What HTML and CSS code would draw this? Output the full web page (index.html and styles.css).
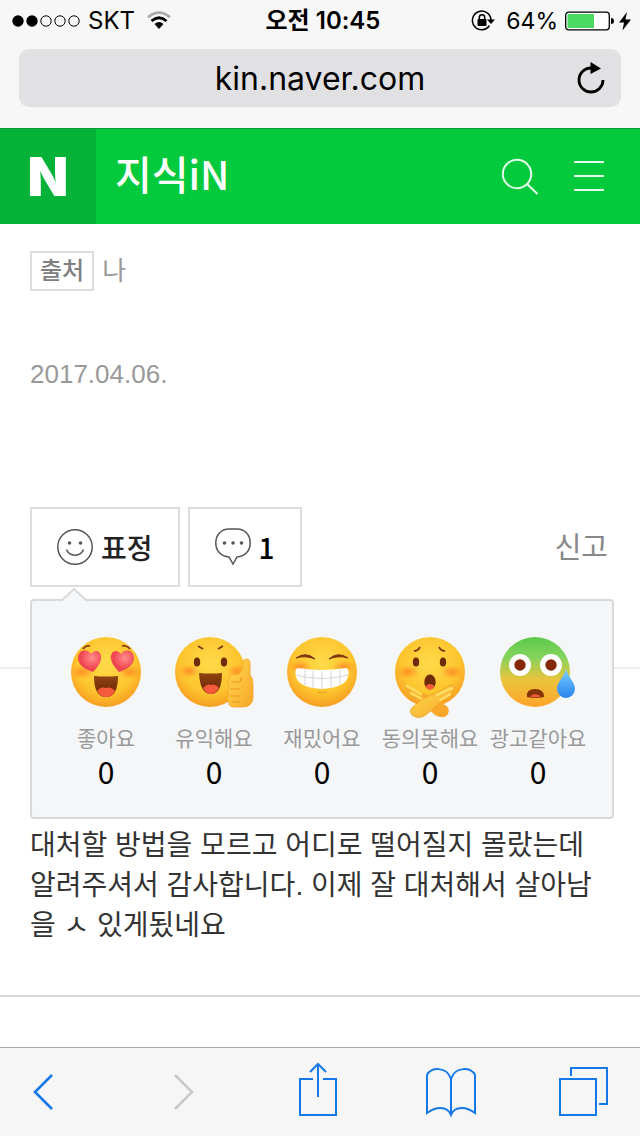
FILE: index.html
```html
<!DOCTYPE html>
<html lang="ko">
<head>
<meta charset="utf-8">
<meta name="viewport" content="width=device-width, initial-scale=1">
<title>지식iN</title>
<link rel="stylesheet" href="styles.css">
</head>
<body>
<div class="browser-top">
  <div class="status">
    <div class="status-left">
      <svg width="68" height="14" viewBox="0 0 68 14" aria-hidden="true">
        <circle cx="6" cy="7" r="5.7"/><circle cx="20" cy="7" r="5.7"/>
        <g fill="none" stroke="#000"><circle cx="34" cy="7" r="5.2"/><circle cx="48" cy="7" r="5.2"/><circle cx="62" cy="7" r="5.2"/></g>
      </svg>
      <span>SKT</span>
      <svg width="24" height="19" viewBox="0 0 24 19" aria-hidden="true">
        <path d="M1 6.200Q12-3 23 6.200" fill="none" stroke="#aaa" stroke-width="2.800"/>
        <path d="M4.500 10Q12 3.500 19.500 10" fill="none" stroke="#000" stroke-width="2.800"/>
        <path d="M7.500 13Q12 9 16.500 13L12 18Z"/>
      </svg>
    </div>
    <strong class="time">오전 10:45</strong>
    <div class="status-right">
      <svg width="24" height="22" viewBox="0 0 24 22" aria-hidden="true">
        <path d="M18.500 15.500A9.300 9.300 0 1 1 20 10" fill="none" stroke="#000" stroke-width="1.500"/>
        <path d="M16 9.500H24L20 14Z"/><rect x="6.500" y="9" width="9" height="7" rx="1"/>
        <path d="M8.300 9.500V7.500a2.700 2.700 0 0 1 5.400 0v2" fill="none" stroke="#000" stroke-width="1.500"/>
      </svg>
      <span class="percent">64%</span>
      <svg width="66" height="20" viewBox="0 0 66 20" aria-hidden="true">
        <rect x=".7" y="1.200" width="43.600" height="17.600" rx="3" fill="#fff" stroke="#000" stroke-width="1.300"/>
        <path d="M2.500 3H29V17H2.500Z" fill="#4cd964"/>
        <path d="M46 7q3 0 3 3t-3 3Z"/><path d="M62 1L54 11.500H59L57.500 19.500L66 8.500H60.500Z"/>
      </svg>
    </div>
  </div>
  <form class="address">
    <input class="address-input" type="text" value="kin.naver.com" aria-label="주소">
    <button class="reload" type="button" aria-label="새로고침">
      <svg width="28" height="32" viewBox="0 0 28 32" aria-hidden="true"><path d="M26 18A12 12 0 1 1 14 6" fill="none" stroke="#000" stroke-width="2.800"/><path d="M13.500 0L24 6.500L13.500 12Z"/></svg>
    </button>
  </form>
</div>

<header class="site-header">
  <a class="logo" href="#" aria-label="네이버">N</a>
  <a class="service" href="#">지식iN</a>
  <button class="head-button" type="button" aria-label="검색">
    <svg width="38" height="38" viewBox="0 0 38 38" fill="none" stroke="#e3fbe9" stroke-width="2"><circle cx="16" cy="16" r="14.200"/><path d="M26 26L36.500 36"/></svg>
  </button>
  <button class="head-button" type="button" aria-label="메뉴">
    <svg width="30" height="38" viewBox="0 0 30 38" stroke="#e3fbe9" stroke-width="2"><path d="M0 4H30M0 18H30M0 32H30"/></svg>
  </button>
</header>

<main>
  <section class="answer">
    <div class="source"><span class="source-tag">출처</span><span>나</span></div>
    <time class="date" datetime="2017-04-06">2017.04.06.</time>
    <div class="actions">
      <button class="action" type="button">
        <svg width="36" height="36" viewBox="0 0 36 36" aria-hidden="true"><g fill="none" stroke="#555" stroke-width="1.500"><circle cx="18" cy="18" r="17.200"/><path d="M9.500 20.500C12 28 24 28 26.500 20.500"/></g><g fill="#555"><circle cx="12.500" cy="14" r="1.800"/><circle cx="23.500" cy="14" r="1.800"/></g></svg>
        <span>표정</span>
      </button>
      <button class="action" type="button">
        <svg width="36" height="38" viewBox="0 0 36 38" aria-hidden="true"><path d="M14 1H22C30 1 35.200 7 35.200 15S30 28.500 22 29L18 36L14 29C6 28.500.8 23 .8 15S6 1 14 1Z" fill="none" stroke="#555" stroke-width="1.500"/><g fill="#555"><circle cx="9.500" cy="15" r="1.800"/><circle cx="18" cy="15" r="1.800"/><circle cx="26.500" cy="15" r="1.800"/></g></svg>
        <span class="count">1</span>
      </button>
      <a class="report" href="#">신고</a>

      <div class="reactions">
        <svg class="pointer" width="26" height="14" viewBox="0 0 26 14" aria-hidden="true"><path d="M0 14L13 1L26 14" fill="#f5f6f8"/><path d="M0 13L13 1L26 13" fill="none" stroke="#d8d9db" stroke-width="2"/></svg>
        <button class="reaction" type="button">
          <svg width="84" height="84" viewBox="0 0 84 84" aria-hidden="true">
            <defs>
              <radialGradient id="face" cx=".5" cy=".38" r=".64"><stop offset="0" stop-color="#ffdb4b"/><stop offset=".65" stop-color="#fdc52e"/><stop offset="1" stop-color="#f59a20"/></radialGradient>
              <radialGradient id="blush"><stop offset="0" stop-color="#ff7b22" stop-opacity=".75"/><stop offset="1" stop-color="#ff8a22" stop-opacity="0"/></radialGradient>
              <radialGradient id="heart" cx=".6" cy=".35"><stop offset="0" stop-color="#ff8c8c"/><stop offset="1" stop-color="#ef4550"/></radialGradient>
              <linearGradient id="mouth" x2="0" y2="1"><stop stop-color="#8d4310"/><stop offset="1" stop-color="#6d2508"/></linearGradient>
              <linearGradient id="sick" x2="0" y2="1"><stop stop-color="#5cc94b"/><stop offset=".28" stop-color="#83d45c"/><stop offset=".62" stop-color="#ecc33c"/><stop offset="1" stop-color="#ffa42a"/></linearGradient>
              <linearGradient id="tear" x2="0" y2="1"><stop stop-color="#7bcfff"/><stop offset="1" stop-color="#2783ee"/></linearGradient>
              <linearGradient id="hand" x2="1" y2="1"><stop stop-color="#ffdc52"/><stop offset="1" stop-color="#f7a526"/></linearGradient>
            </defs>
            <circle cx="42" cy="38" r="35" fill="url(#face)"/>
            <ellipse cx="18" cy="38" rx="12" ry="7" fill="url(#blush)"/><ellipse cx="66" cy="38" rx="12" ry="7" fill="url(#blush)"/>
            <path d="M19 15Q22 11 26 12M58 12Q63 11 66 15" fill="none" stroke="#7c3510" stroke-width="1.600"/>
            <path d="M29 38Q14 33 14 24C14 16 23 14 27 20C32 14 38 18 37 25Q36 31 29 38Z" fill="url(#heart)"/>
            <path d="M55 38Q48 31 47 25C46 18 52 14 57 20C61 14 70 16 70 24Q70 33 55 38Z" fill="url(#heart)"/>
            <path d="M30 42Q42 43 54 42Q54 63 42 63T30 42Z" fill="url(#mouth)"/><path d="M33 57Q37 52 42 54Q47 52 51 57Q48 63 42 63T33 57Z" fill="#f45b3b"/>
          </svg>
          <span class="reaction-name">좋아요</span><span class="reaction-count">0</span>
        </button>
        <button class="reaction" type="button">
          <svg width="84" height="84" viewBox="0 0 84 84" aria-hidden="true">
            <circle cx="38" cy="38" r="35" fill="url(#face)"/><ellipse cx="17" cy="37" rx="11" ry="7" fill="url(#blush)"/><ellipse cx="65" cy="37" rx="10" ry="7" fill="url(#blush)"/>
            <path d="M26 12L31 15M46 15L51 12" stroke="#7c3510" stroke-width="1.700"/>
            <g fill="#6d2b09"><ellipse cx="25" cy="28" rx="3.200" ry="4.600"/><ellipse cx="52" cy="28" rx="3.200" ry="4.600"/></g>
            <path d="M27 39Q38 40 50 39Q50 60 39 60T27 39Z" fill="url(#mouth)"/><path d="M31 54Q35 49 39 51Q43 49 47 54Q44 60 39 60T31 54Z" fill="#f45b3b"/>
            <path d="M60 41L67 40Q71 37 71 29Q71 25 75 25Q78 25 78 30V41Q81 44 81 50V64Q80 73 71 73H61Q56 72 57 68Q54 65 57 61Q54 57 57 53Q54 49 57 45Q57 41 60 41Z" fill="url(#hand)" stroke="#f3a42b" stroke-width=".8"/>
            <path d="M59 48H67Q70 47 69 43M58 55H68M58 62H68M60 68H67" fill="none" stroke="#e99722" stroke-width="1.200"/>
          </svg>
          <span class="reaction-name">유익해요</span><span class="reaction-count">0</span>
        </button>
        <button class="reaction" type="button">
          <svg width="84" height="84" viewBox="0 0 84 84" aria-hidden="true">
            <circle cx="42" cy="38" r="35" fill="url(#face)"/><ellipse cx="20" cy="33" rx="12" ry="7" fill="url(#blush)"/><ellipse cx="64" cy="33" rx="12" ry="7" fill="url(#blush)"/>
            <path d="M16 24Q26 17 35 25Q25 21 16 24ZM49 25Q58 17 68 24Q59 21 49 25Z" fill="#7c3510" stroke="#7c3510"/>
            <path d="M18 34Q42 38 66 34Q70 35 68 42C66 59 18 59 16 42Q14 35 18 34Z" fill="#fff"/>
            <path d="M16 41Q42 48 68 41M25 36V51M33 37V54M42 37V55M51 37V54M60 36V51" fill="none" stroke="#d8d2d5"/>
            <path d="M37 58Q42 60 47 58" fill="none" stroke="#e99a24"/>
          </svg>
          <span class="reaction-name">재밌어요</span><span class="reaction-count">0</span>
        </button>
        <button class="reaction" type="button">
          <svg width="84" height="84" viewBox="0 0 84 84" aria-hidden="true">
            <circle cx="42" cy="38" r="35" fill="url(#face)"/><ellipse cx="20" cy="38" rx="12" ry="7" fill="url(#blush)"/><ellipse cx="64" cy="38" rx="12" ry="7" fill="url(#blush)"/>
            <path d="M26 17Q30 17 32 13M51 13Q53 17 57 17" fill="none" stroke="#7c3510" stroke-width="1.700"/>
            <g fill="#6d2b09"><ellipse cx="28" cy="28" rx="3.200" ry="4.600"/><ellipse cx="55" cy="28" rx="3.200" ry="4.600"/><ellipse cx="42" cy="48" rx="5.700" ry="7.500"/></g><path d="M37.500 52Q42 48 46.500 52Q45 56 42 55.500Q39 56 37.500 52Z" fill="#f45b3b"/>
            <path d="M19 52Q21 50 25 54L37 60Q47 63 55 70Q63 73 60 80Q56 86 47 81L31 67Q22 65 20 61Q17 58 23 60L18 56Q16 53 19 52Z" fill="#f8a829"/>
            <path d="M19 52L33 60M23 59L34 65" stroke="#ffdb5b" stroke-width="3" stroke-linecap="round"/>
            <path d="M65 52Q62 50 58 54L45 60Q34 64 26 72Q20 76 24 81Q30 86 38 81L53 68Q62 64 64 61Q67 58 63 59L67 55Q67 52 65 52Z" fill="url(#hand)" stroke="#ed9a20" stroke-width=".7"/>
            <path d="M64 54L49 61M62 60L52 66" stroke="#ffe06b" stroke-width="2" stroke-linecap="round"/>
          </svg>
          <span class="reaction-name">동의못해요</span><span class="reaction-count">0</span>
        </button>
        <button class="reaction" type="button">
          <svg width="84" height="84" viewBox="0 0 84 84" aria-hidden="true">
            <circle cx="39" cy="38" r="35" fill="url(#sick)"/>
            <g fill="#fff"><circle cx="24" cy="31" r="11"/><circle cx="55" cy="31" r="11"/></g><g fill="#842807"><circle cx="24" cy="31" r="5.700"/><circle cx="55" cy="31" r="5.700"/></g>
            <path d="M31 63Q30 55 39 55T48 63Q39 65 31 63Z" fill="#853407"/><path d="M34 62.500Q39 58 45 62.500Q39 64 34 62.500Z" fill="#f45b3b"/>
            <path d="M70 35C72 43 79 48 79 55A9 9 0 0 1 61 55C61 48 68 43 70 35Z" fill="url(#tear)"/>
          </svg>
          <span class="reaction-name">광고같아요</span><span class="reaction-count">0</span>
        </button>
      </div>
    </div>
  </section>
  <section class="comment"><p>대처할 방법을 모르고 어디로 떨어질지 몰랐는데 알려주셔서 감사합니다. 이제 잘 대처해서 살아남을 ㅅ 있게됬네요</p></section>
</main>

<nav class="toolbar" aria-label="브라우저 도구">
  <button class="tool" type="button" aria-label="뒤로"><svg viewBox="0 0 52 54"><path d="M26 10L9 27L26 44" stroke-width="2.600"/></svg></button>
  <button class="tool tool-off" type="button" aria-label="앞으로" disabled><svg viewBox="0 0 52 54"><path d="M16 10L33 27L16 44" stroke-width="2.600"/></svg></button>
  <button class="tool" type="button" aria-label="공유"><svg viewBox="0 0 52 54"><path d="M21 14H8V50H44V14H31M26 32V0M18 7L26-1L34 7"/></svg></button>
  <button class="tool" type="button" aria-label="책갈피"><svg viewBox="0 0 52 54"><path d="M26 49V14C22 1 5 2 2 10V48C10 42 22 40 26 50C30 40 42 42 50 48V10C47 2 30 1 26 14"/></svg></button>
  <button class="tool" type="button" aria-label="탭"><svg viewBox="0 0 52 54"><path d="M2 14H38V50H2ZM13 11V3H49V39H41"/></svg></button>
</nav>
</body>
</html>
```
FILE: styles.css
```css
* { box-sizing: border-box; }
body {
  margin: 0;
  min-height: 100vh;
  display: flex;
  flex-direction: column;
  background: #fff;
  color: #333;
  font-family: "Liberation Sans", "Noto Sans CJK KR", sans-serif;
}
button, input { font: inherit; color: inherit; margin: 0; padding: 0; border: 0; background: none; }
a { color: inherit; text-decoration: none; }
svg { display: block; flex: none; overflow: visible; }

.browser-top {
  height: 128px;
  background: #f7f7f8;
  color: #000;
  font-family: Inter, "Noto Sans CJK KR", sans-serif;
}
.status {
  height: 49px;
  padding: 0 9px 8px 12px;
  display: grid;
  grid-template-columns: 1fr auto 1fr;
  align-items: center;
  font-size: 24px;
  line-height: 32px;
}
.status-left, .status-right { display: flex; align-items: center; }
.status-left { gap: 8px; }
.status-left span { margin-right: 4px; }
.status-right { justify-content: flex-end; gap: 7px; }
.percent { margin-left: 4px; font-size: 23px; }
.time { padding-left: 3px; font-weight: 600; }
.address {
  margin: 0 19px;
  height: 58px;
  padding: 0 16px;
  display: flex;
  align-items: center;
  border-radius: 10px;
  background: #e1e1e4;
}
.address-input { flex: 1; min-width: 0; padding-left: 28px; text-align: center; font-size: 32px; height: 58px; }

.site-header {
  height: 96px;
  padding-right: 36px;
  display: flex;
  align-items: center;
  background: #03c93d;
  border-top: 1px solid #079a36;
  color: #fff;
}
.logo {
  align-self: stretch;
  width: 96px;
  display: flex;
  align-items: center;
  justify-content: center;
  background: #06b338;
  font-family: Inter, sans-serif;
  font-weight: 900;
  font-size: 53px;
}
.service { margin: 0 auto 0 19px; padding-bottom: 8px; font: 500 40px/60px "Noto Sans CJK KR", sans-serif; }
.head-button + .head-button { margin-left: 35px; }

.answer { padding: 27px 26px 80px 30px; border-bottom: 2px solid #eee; }
.source { display: flex; align-items: center; gap: 8px; height: 40px; color: #999; font-size: 26px; line-height: 36px; }
.source-tag { height: 40px; padding: 0 8px; border: 2px solid #ddd; color: #808080; font-size: 24px; font-weight: 500; }
.date { display: block; margin-top: 63px; color: #999; font-size: 26px; line-height: 40px; }
.actions { position: relative; margin-top: 113px; display: flex; align-items: center; gap: 8px; }
.action {
  height: 80px;
  padding: 0 25px;
  display: flex;
  align-items: center;
  gap: 8px;
  border: 2px solid #ddd;
  background: #fff;
  color: #222;
  font-size: 28px;
  font-weight: 500;
}
.count { color: #000; font-family: "Noto Sans CJK KR", sans-serif; }
.report { margin-left: auto; padding: 0 6px 4px 0; color: #888; font-size: 29px; }

.reactions {
  position: absolute;
  top: 92px;
  left: 0;
  right: 0;
  padding: 33px 20px 27px;
  display: grid;
  grid-template-columns: repeat(5, 1fr);
  border: 2px solid #d8d9db;
  border-radius: 4px;
  background: #f5f6f8;
}
.pointer { position: absolute; left: 29px; top: -13px; }
.reaction { display: flex; flex-direction: column; align-items: center; white-space: nowrap; }
.reaction-name { margin-top: 5px; color: #999; font-size: 21px; line-height: 32px; }
.reaction-count { color: #000; font: 30px/32px "Noto Sans CJK KR", sans-serif; padding-bottom: 3px; }

.comment { padding: 157px 30px 49px; border-bottom: 2px solid #d8d8d8; }
.comment p { margin: 0; font-size: 28px; line-height: 40px; word-break: break-all; }

.toolbar {
  margin-top: auto;
  height: 89px;
  padding: 0 30px 0 26px;
  display: flex;
  align-items: center;
  justify-content: space-between;
  border-top: 1px solid #aaa;
  background: #f6f6f7;
}
.tool svg { width: 52px; height: 54px; fill: none; stroke: #1478e6; stroke-width: 2; }
.tool-off svg { stroke: #c9c9c9; }
```
